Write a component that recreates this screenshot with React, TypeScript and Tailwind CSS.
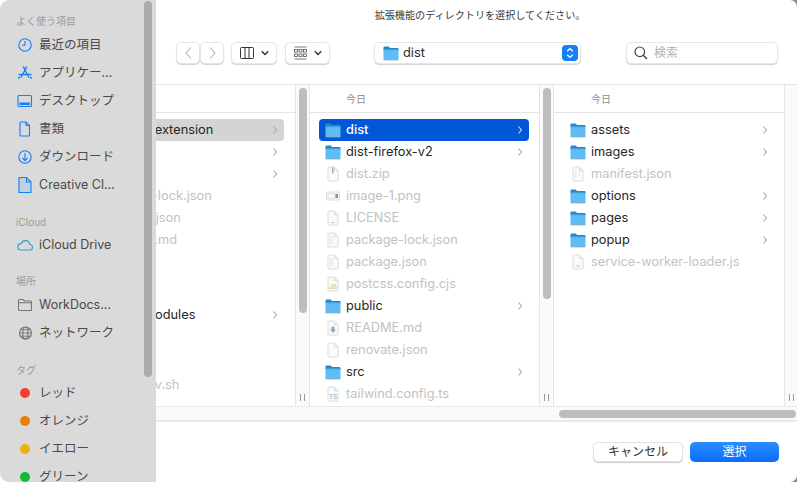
import type { ReactNode } from "react";

type FileKind = "folder" | "zip" | "png" | "license" | "lines" | "blank" | "js" | "readme" | "ts" | "loader" | "manifest";

type Row = {
  name?: string;
  kind?: FileKind;
  active?: boolean;
  selected?: boolean;
  gap?: string;
  indent?: string;
};

// first column sits mostly behind the sidebar
const firstCol: Row[] = [
  { name: "chrome-extension", active: true, selected: true, indent: "pl-[103px]" },
  { active: true, indent: "pl-[103px]" },
  { active: true, indent: "pl-[103px]" },
  { name: "package-lock.json", indent: "pl-[100px]" },
  { name: "package.json", indent: "pl-[100px]" },
  { name: "README.md", indent: "pl-[101px]" },
  {},
  {},
  { name: "node_modules", active: true, gap: "mt-[9px]", indent: "pl-[107px]" },
  { name: "scripts-dev.sh", gap: "mt-[48px]", indent: "pl-[93px]" },
];

const secondCol: Row[] = [
  { name: "dist", kind: "folder", active: true, selected: true },
  { name: "dist-firefox-v2", kind: "folder", active: true },
  { name: "dist.zip", kind: "zip" },
  { name: "image-1.png", kind: "png" },
  { name: "LICENSE", kind: "license" },
  { name: "package-lock.json", kind: "lines" },
  { name: "package.json", kind: "lines" },
  { name: "postcss.config.cjs", kind: "js" },
  { name: "public", kind: "folder", active: true },
  { name: "README.md", kind: "readme" },
  { name: "renovate.json", kind: "blank" },
  { name: "src", kind: "folder", active: true },
  { name: "tailwind.config.ts", kind: "ts" },
];

const thirdCol: Row[] = [
  { name: "assets", kind: "folder", active: true },
  { name: "images", kind: "folder", active: true },
  { name: "manifest.json", kind: "manifest" },
  { name: "options", kind: "folder", active: true },
  { name: "pages", kind: "folder", active: true },
  { name: "popup", kind: "folder", active: true },
  { name: "service-worker-loader.js", kind: "loader" },
];

function FolderIcon() {
  return (
    <svg width="16" height="15" viewBox="0 0 16 15" className="shrink-0">
      <path d="M0.5 3V1.8C0.5 1 1 .5 1.8 .5H5.6L7.2 2H14.2C15 2 15.5 2.5 15.5 3.3V4H.5Z" fill="#2b86c5" />
      <path d="M.5 3.6H15.5V13C15.5 13.8 15 14.3 14.2 14.3H1.8C1 14.3 .5 13.8 .5 13Z" fill="#5fbcf4" />
      <path d="M.5 3.2H15.5V4.2H.5Z" fill="#3b9ddd" />
      <path d="M.5 13.6H15.5V14.2H.5Z" fill="#9aa7b0" />
    </svg>
  );
}

function DocIcon({ kind }: { kind: FileKind }) {
  const stroke = "#dcdcdc";
  return (
    <svg width="16" height="16" viewBox="0 0 16 16" className="shrink-0">
      {kind === "png" ? (
        <>
          <rect x="1.5" y="4" width="13" height="8" rx="1" fill="#f6f6f6" stroke={stroke} />
          <rect x="3" y="6" width="7" height="4" fill="#ffffff" stroke="#c8c8c8" strokeWidth=".5" />
          <rect x="10.5" y="6" width="2.5" height="4" fill="#8d8d8d" />
        </>
      ) : (
        <>
          <path d="M3 2.2C3 1.5 3.5 1 4.2 1H9.5L13 4.5V14C13 14.6 12.6 15 12 15H4C3.4 15 3 14.6 3 14Z" fill="#fafafa" stroke={stroke} />
          <path d="M9.5 1V4.5H13" fill="#f0f0f0" stroke={stroke} />
        </>
      )}
      {kind === "zip" && <rect x="7" y="1.5" width="1.5" height="6" fill="#a8a8a8" />}
      {kind === "license" && <rect x="6.5" y="12" width="3" height="1" fill="#bdbdbd" />}
      {kind === "lines" && <rect x="4.5" y="4" width="4" height="8" rx="1" fill="#eeeeee" />}
      {kind === "manifest" && (
        <path d="M5 6H6M5 8.5H6M5 11H6M9 6.5H10M9 9H10" stroke="#cfcfcf" strokeWidth="1" />
      )}
      {kind === "loader" && <rect x="6.5" y="11.5" width="3" height="1" fill="#b5b5b5" />}
      {kind === "readme" && (
        <path d="M6.5 6.5H9.5V9.5H11L8 13L5 9.5H6.5Z" fill="#8fa9bd" />
      )}
      {kind === "js" && (
        <text x="8" y="12.5" textAnchor="middle" fontSize="6.5" fontWeight="700" fill="#d9d68a">
          JS
        </text>
      )}
      {kind === "ts" && (
        <text x="8" y="12.5" textAnchor="middle" fontSize="6.5" fontWeight="700" fill="#9cc4d8">
          TS
        </text>
      )}
    </svg>
  );
}

function Chevron({ color }: { color: string }) {
  return (
    <svg width="6" height="10" viewBox="0 0 6 10" className="ml-auto shrink-0">
      <path d="M1.5 1.5L4.5 5L1.5 8.5" fill="none" stroke={color} strokeWidth="1.1" />
    </svg>
  );
}

function Column({
  rows,
  width,
  rowMargin,
  headerInset,
  header,
}: {
  rows: Row[];
  width: string;
  rowMargin: string;
  headerInset?: string;
  header?: string;
}) {
  return (
    <div className={`shrink-0 overflow-hidden ${width}`}>
      <div className={`flex h-[28px] items-center border-b border-[#e5e5e5] pt-[2px] text-[10px] text-[#8c8c8c] ${headerInset ?? ""}`}>
        {header}
      </div>
      <div className={`pt-[6px] ${rowMargin}`}>
        {rows.map((row, i) => (
          <div
            key={i}
            className={`flex h-[22px] items-center rounded-[4px] pr-[6px] ${row.gap ?? ""} ${row.indent ?? "pl-[6px]"} ${
              row.selected ? (row.indent ? "bg-[#d4d4d4]" : "bg-[#0257d8]") : ""
            }`}
          >
            {row.kind && (row.kind === "folder" ? <FolderIcon /> : <DocIcon kind={row.kind} />)}
            {row.name && (
              <span
                className={`text-[12.8px] whitespace-nowrap ${row.indent ? "" : "ml-[5px]"} ${
                  row.selected && !row.indent
                    ? "font-medium text-white"
                    : row.active
                      ? "text-[#262626]"
                      : "text-[#c2c2c2]"
                }`}
              >
                {row.name}
              </span>
            )}
            {row.active && <Chevron color={row.selected && !row.indent ? "#cfe0fa" : "#a6a6a6"} />}
          </div>
        ))}
      </div>
    </div>
  );
}

function Gutter({ thumb }: { thumb: string }) {
  return (
    <div className="flex w-[15px] shrink-0 flex-col items-center border-x border-[#e5e5e5] bg-[#fafafa] pt-[3px]">
      <div className={`w-[8px] rounded-full bg-[#bdbdbd] ${thumb}`} />
      <Handle />
    </div>
  );
}

function Handle() {
  return (
    <div className="mt-auto mb-[5px] flex gap-[3px]">
      <span className="h-[7px] w-px bg-[#9a9a9a]" />
      <span className="h-[7px] w-px bg-[#9a9a9a]" />
    </div>
  );
}

function ToolButton({ className, children }: { className: string; children: ReactNode }) {
  return (
    <div
      className={`flex h-[22px] items-center justify-center rounded-[5px] border border-[#e6e6e6] bg-white shadow-[0_1px_1px_rgba(0,0,0,0.18)] ${className}`}
    >
      {children}
    </div>
  );
}

function SideHeading({ children, className }: { children: ReactNode; className: string }) {
  return <div className={`h-[14px] pl-[16px] text-[10px] leading-[14px] text-[#9b9b9b] ${className}`}>{children}</div>;
}

function SideItem({ icon, label }: { icon: ReactNode; label: string }) {
  return (
    <div className="flex h-[28px] items-center">
      <span className="flex w-[39px] shrink-0 justify-center pl-[11px]">{icon}</span>
      <span className="text-[12.5px] whitespace-nowrap text-[#4a4a4a]">{label}</span>
    </div>
  );
}

const blue = "#147efb";

function SideSvg({ children, color = blue }: { children: ReactNode; color?: string }) {
  return (
    <svg width="16" height="18" viewBox="0 0 16 18" fill="none" stroke={color} strokeWidth="1.1" className="shrink-0">
      {children}
    </svg>
  );
}

function Dot({ color }: { color: string }) {
  return (
    <span className="flex h-[18px] w-[16px] items-center justify-center">
      <span className={`h-[10px] w-[10px] rounded-full ${color}`} />
    </span>
  );
}

function Sidebar() {
  return (
    <aside className="absolute top-0 left-0 h-full w-[156px] overflow-hidden rounded-l-[9px] bg-[#dadada]">
      <div className="absolute top-[1px] left-[144px] h-[376px] w-[8px] rounded-full bg-[#ababab]" />
      <SideHeading className="mt-[14px]">よく使う項目</SideHeading>
      <div className="mt-[3px]">
        <SideItem
          label="最近の項目"
          icon={
            <SideSvg>
              <circle cx="8" cy="9" r="6.2" />
              <path d="M8 5V9.2H5" />
            </SideSvg>
          }
        />
        <SideItem
          label="アプリケー…"
          icon={
            <SideSvg>
              <path d="M9.8 2.5L4 13.5M6.2 2.5L12 13.5M1.5 10.5H14.5M1 14.5L3 13M15 14.5L13 13" strokeWidth="1.4" />
            </SideSvg>
          }
        />
        <SideItem
          label="デスクトップ"
          icon={
            <SideSvg>
              <rect x="1" y="3.5" width="13.5" height="11" rx="1" />
              <rect x="2.5" y="10.5" width="10.5" height="2.6" fill={blue} stroke="none" />
            </SideSvg>
          }
        />
        <SideItem
          label="書類"
          icon={
            <SideSvg>
              <path d="M3 3C3 2.4 3.4 2 4 2H9L12.5 5.5V15C12.5 15.6 12.1 16 11.5 16H4C3.4 16 3 15.6 3 15Z" />
              <path d="M9 2V5.5H12.5" />
            </SideSvg>
          }
        />
        <SideItem
          label="ダウンロード"
          icon={
            <SideSvg>
              <circle cx="8" cy="9" r="6.2" />
              <path d="M8 5V12.5M5.2 9.8L8 12.6L10.8 9.8" />
            </SideSvg>
          }
        />
        <SideItem
          label="Creative Cl..."
          icon={
            <SideSvg>
              <path d="M2 1.5H9.5L14 6V16.5H2Z" fill="#bfd0e4" />
              <path d="M9.5 1.5V6H14" />
            </SideSvg>
          }
        />
      </div>
      <SideHeading className="mt-[16px]">iCloud</SideHeading>
      <div className="mt-[2px]">
        <SideItem
          label="iCloud Drive"
          icon={
            <SideSvg color="#2aa3c9">
              <path d="M4 14H12.5C14.2 14 15.5 12.8 15.5 11.2C15.5 9.7 14.3 8.6 12.8 8.5C12.5 6.3 10.6 4.6 8.4 4.6C6.4 4.6 4.8 5.8 4.2 7.6C2.2 7.7 .7 9.2 .7 11C.7 12.7 2.2 14 4 14Z" />
            </SideSvg>
          }
        />
      </div>
      <SideHeading className="mt-[15px]">場所</SideHeading>
      <div className="mt-[3px]">
        <SideItem
          label="WorkDocs..."
          icon={
            <SideSvg color="#777777">
              <path d="M1.5 4.5C1.5 4 1.9 3.5 2.5 3.5H6L7.5 5H13.5C14.1 5 14.5 5.4 14.5 6V13.5C14.5 14.1 14.1 14.5 13.5 14.5H2.5C1.9 14.5 1.5 14.1 1.5 13.5Z" />
              <path d="M1.5 6.8H14.5" />
            </SideSvg>
          }
        />
        <SideItem
          label="ネットワーク"
          icon={
            <SideSvg color="#777777">
              <circle cx="8.5" cy="9" r="6" />
              <ellipse cx="8.5" cy="9" rx="2.6" ry="6" />
              <path d="M2.5 9H14.5M3.6 5.8H13.4M3.6 12.2H13.4" strokeWidth=".9" />
            </SideSvg>
          }
        />
      </div>
      <SideHeading className="mt-[16px]">タグ</SideHeading>
      <div className="mt-[2px]">
        <SideItem label="レッド" icon={<Dot color="bg-[#fb3a30]" />} />
        <SideItem label="オレンジ" icon={<Dot color="bg-[#e97e0a]" />} />
        <SideItem label="イエロー" icon={<Dot color="bg-[#e8b20a]" />} />
        <SideItem label="グリーン" icon={<Dot color="bg-[#12b83a]" />} />
      </div>
    </aside>
  );
}

export default function App() {
  return (
    <div className="h-[482px] w-[797px] overflow-hidden bg-[#8a8a8a] font-['Inter','Noto_Sans_CJK_JP',sans-serif]">
      <div className="relative flex h-full flex-col overflow-hidden rounded-r-[7px] bg-white">
        <header className="h-[85px] shrink-0 border-b border-[#e5e5e5]">
          <div className="pt-[8px] pl-[163px] text-center text-[10.1px] leading-[14px] text-[#3a3a3a]">
            拡張機能のディレクトリを選択してください。
          </div>
          <div className="mt-[20px] flex items-center pl-[176px]">
            <ToolButton className="w-[24px]">
              <svg width="9" height="14" viewBox="0 0 9 14" fill="none" stroke="#b5b5b5" strokeWidth="1.1">
                <path d="M7 1.5L2 7L7 12.5" />
              </svg>
            </ToolButton>
            <ToolButton className="w-[24px]">
              <svg width="9" height="14" viewBox="0 0 9 14" fill="none" stroke="#b5b5b5" strokeWidth="1.1">
                <path d="M2 1.5L7 7L2 12.5" />
              </svg>
            </ToolButton>
            <ToolButton className="ml-[7px] w-[46px] gap-[7px]">
              <svg width="14" height="12" viewBox="0 0 14 12" fill="none" stroke="#333333" strokeWidth="1">
                <rect x=".5" y=".5" width="13" height="11" rx="1" />
                <path d="M5 .5V11.5M9 .5V11.5" />
              </svg>
              <svg width="8" height="6" viewBox="0 0 8 6" fill="none" stroke="#333333" strokeWidth="1.4">
                <path d="M.8 1.2L4 4.4L7.2 1.2" />
              </svg>
            </ToolButton>
            <ToolButton className="ml-[8px] w-[45px] gap-[7px]">
              <svg width="13" height="14" viewBox="0 0 13 14" fill="none" stroke="#555555" strokeWidth=".8">
                <path d="M.5 1H12.5M.5 13H12.5" />
                <rect x=".5" y="3.5" width="3" height="2.5" />
                <rect x="5" y="3.5" width="3" height="2.5" />
                <rect x="9.5" y="3.5" width="3" height="2.5" />
                <rect x=".5" y="8" width="3" height="2.5" />
                <rect x="5" y="8" width="3" height="2.5" />
                <rect x="9.5" y="8" width="3" height="2.5" />
              </svg>
              <svg width="8" height="6" viewBox="0 0 8 6" fill="none" stroke="#333333" strokeWidth="1.4">
                <path d="M.8 1.2L4 4.4L7.2 1.2" />
              </svg>
            </ToolButton>
            <ToolButton className="ml-[44px] w-[207px] justify-start! pr-[1px] pl-[8px]">
              <FolderIcon />
              <span className="ml-[4px] text-[12.8px] text-[#2a2a2a]">dist</span>
              <span className="mr-[1px] ml-auto flex h-[16px] w-[16px] items-center justify-center rounded-[4px] bg-[#147efb]">
                <svg width="8" height="12" viewBox="0 0 8 12" fill="none" stroke="white" strokeWidth="1.4">
                  <path d="M1.2 4.2L4 1.6L6.8 4.2M1.2 7.8L4 10.4L6.8 7.8" />
                </svg>
              </span>
            </ToolButton>
            <ToolButton className="ml-[45px] w-[152px] justify-start! pl-[7px]">
              <svg width="14" height="14" viewBox="0 0 14 14" fill="none" stroke="#444444" strokeWidth="1.2">
                <circle cx="5.8" cy="5.8" r="4.8" />
                <path d="M9.3 9.3L13 13" strokeWidth="1.5" />
              </svg>
              <span className="ml-[6px] text-[12px] text-[#b4b4b4]">検索</span>
            </ToolButton>
          </div>
        </header>

        <div className="flex h-[321px] shrink-0">
          <Column rows={firstCol} width="w-[295px]" rowMargin="mr-[11px]" />
          <Gutter thumb="h-[225px]" />
          <Column rows={secondCol} width="w-[229px]" rowMargin="mr-[10px] ml-[9px]" headerInset="pl-[36px]" header="今日" />
          <Gutter thumb="h-[211px]" />
          <Column rows={thirdCol} width="w-[230px]" rowMargin="mx-[10px]" headerInset="pl-[37px]" header="今日" />
          <div className="flex flex-1 flex-col items-center border-l border-[#e5e5e5] bg-[#fafafa]">
            <Handle />
          </div>
        </div>

        <div className="flex h-[16px] shrink-0 items-center justify-end border-t border-b-2 border-[#e8e8e8] bg-[#fafafa] pr-[1px]">
          <div className="h-[8px] w-[237px] rounded-full bg-[#bdbdbd]" />
        </div>

        <footer className="flex flex-1 items-start justify-end gap-[7px] pt-[20px] pr-[18px]">
          <div className="flex h-[20px] w-[90px] items-center justify-center rounded-[5px] border border-[#e2e2e2] bg-white text-[12px] text-[#333333] shadow-[0_1px_1px_rgba(0,0,0,0.2)]">
            キャンセル
          </div>
          <div className="flex h-[20px] w-[89px] items-center justify-center rounded-[5px] bg-gradient-to-b from-[#2b8cff] to-[#0a6cfb] text-[12px] text-white">
            選択
          </div>
        </footer>

        <Sidebar />
      </div>
    </div>
  );
}
